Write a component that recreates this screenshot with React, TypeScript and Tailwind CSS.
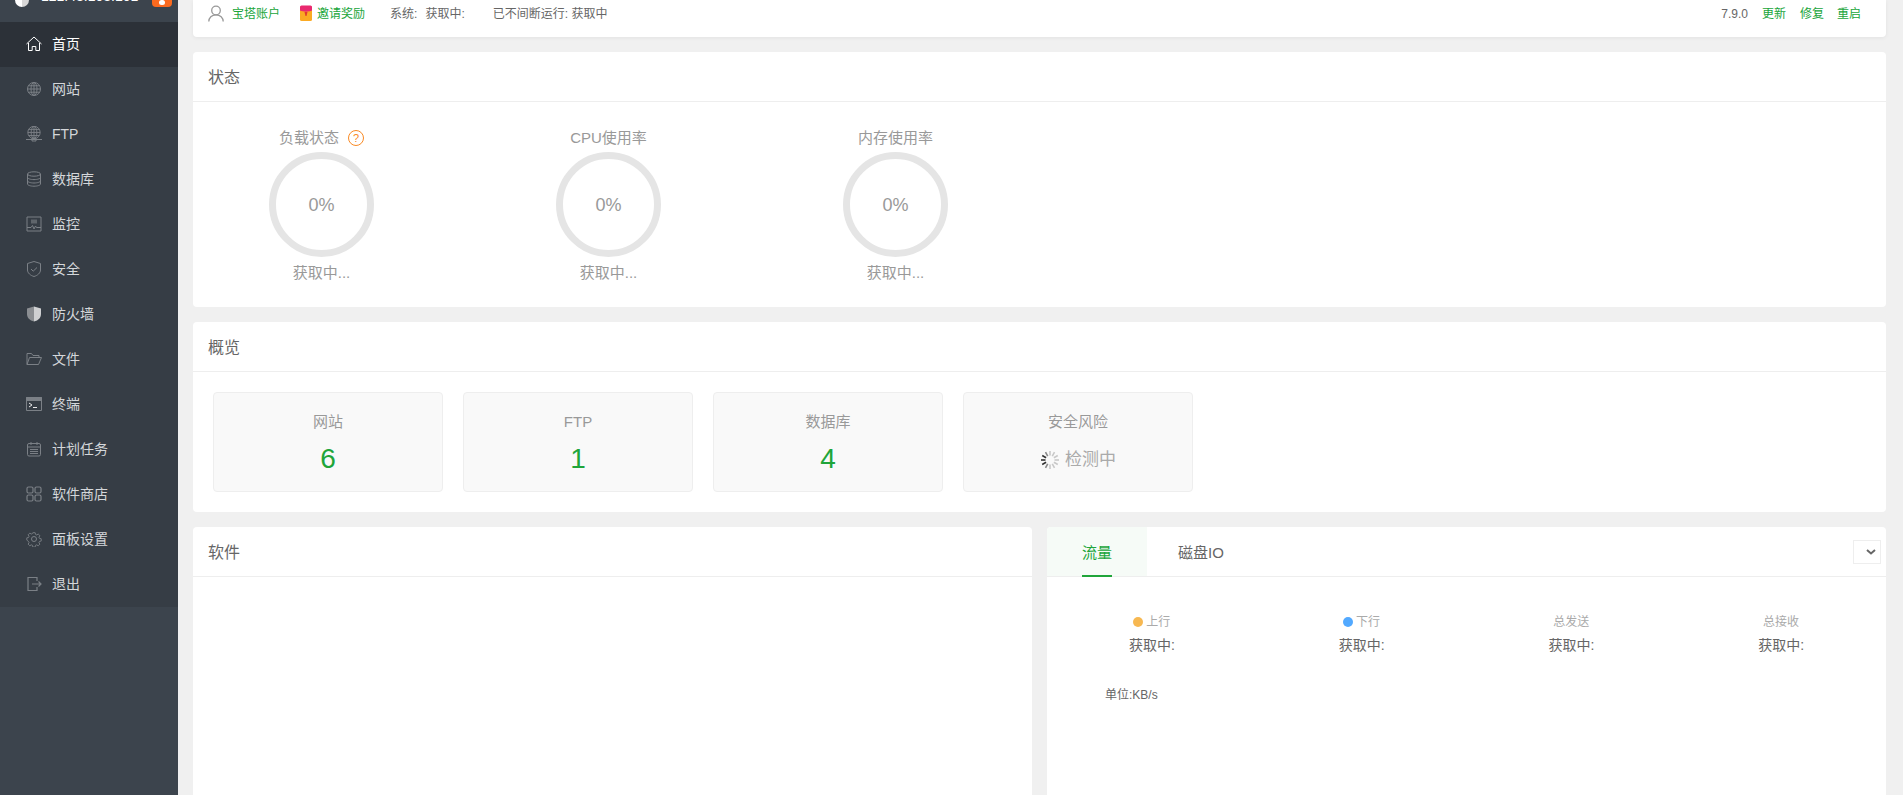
import type { ReactNode } from "react";

const iconProps = {
  width: 16,
  height: 16,
  viewBox: "0 0 16 16",
  fill: "none",
  stroke: "currentColor",
  strokeWidth: 1,
};

const Globe = () => (
  <g>
    <circle cx="8" cy="7" r="6.5" />
    <ellipse cx="8" cy="7" rx="3" ry="6.5" />
    <path d="M8 .5v13M1.5 7h13M2.4 3.8h11.2M2.4 10.2h11.2" />
  </g>
);

const NAV: { label: string; icon: ReactNode }[] = [
  {
    label: "首页",
    icon: (
      <svg {...iconProps} className="text-white">
        <path d="M.5 8 8 1l7.5 7M2.5 7v7.5h3.7v-4h3.6v4h3.7V7" />
      </svg>
    ),
  },
  {
    label: "网站",
    icon: (
      <svg {...iconProps}>
        <g transform="translate(0 1)">
          <Globe />
        </g>
      </svg>
    ),
  },
  {
    label: "FTP",
    icon: (
      <svg {...iconProps}>
        <g transform="translate(.4 -.2) scale(.95)">
          <Globe />
        </g>
        <path d="M0 13.5h16M6 12h4v3H6z" />
      </svg>
    ),
  },
  {
    label: "数据库",
    icon: (
      <svg {...iconProps}>
        <ellipse cx="8" cy="3" rx="6.5" ry="2.2" />
        <path d="M1.500 3v10c0 1.200 2.900 2.200 6.500 2.200s6.500-1 6.500-2.200V3M1.500 6.400c0 1.200 2.900 2.200 6.500 2.200s6.500-1 6.500-2.200M1.500 9.800c0 1.200 2.900 2.200 6.500 2.200s6.500-1 6.500-2.200" />
      </svg>
    ),
  },
  {
    label: "监控",
    icon: (
      <svg {...iconProps}>
        <path d="M1 1h14v14H1z" />
        <path d="M1 11.500h4l1.500-2 1.500 3.500 1.500-3 1 1.500h4.500" />
        <path d="M5 3.500h6v4H5z" fill="currentColor" stroke="none" opacity=".6" />
      </svg>
    ),
  },
  {
    label: "安全",
    icon: (
      <svg {...iconProps}>
        <path d="M8 .5 14.500 2.500V9c0 3-3 5.500-6.500 6.500C4.500 14.500 1.500 12 1.500 9V2.500z" />
        <path d="m5 8 2.200 2.200L11 6.500" />
      </svg>
    ),
  },
  {
    label: "防火墙",
    icon: (
      <svg width="16" height="16" viewBox="0 0 16 16">
        <path d="M8 .5V15.500C3.500 14.500 1 11.500 1 8V2.500z" fill="#8b8e92" />
        <path d="M8 .5 15 2.500V8c0 3.500-2.500 6.500-7 7.500z" fill="#cfd0d2" />
      </svg>
    ),
  },
  {
    label: "文件",
    icon: (
      <svg {...iconProps}>
        <path d="M1 13.500V2.500h4.500l1.500 2h6v2M1 13.500h11.500L15.500 6.500H3.500z" />
      </svg>
    ),
  },
  {
    label: "终端",
    icon: (
      <svg {...iconProps}>
        <path d="M.5 1.500h15v13H.5z" />
        <path d="M.5 1.500h15v3H.5z" fill="currentColor" />
        <path d="m3 7 3 2-3 2" stroke="#e8e8e8" />
        <path d="M7 11.500h4" stroke="#e8e8e8" />
      </svg>
    ),
  },
  {
    label: "计划任务",
    icon: (
      <svg {...iconProps}>
        <rect x="1.500" y="2.500" width="13" height="12.500" rx="1.500" />
        <path d="M1.500 6h13M5 1v3M11 1v3M4 8.500h8M4 10.500h8M4 12.500h8" />
      </svg>
    ),
  },
  {
    label: "软件商店",
    icon: (
      <svg {...iconProps} strokeWidth={1.2}>
        <rect x="1" y="1" width="6" height="6" rx="1.500" />
        <rect x="9" y="1" width="6" height="6" rx="1.500" />
        <rect x="1" y="9" width="6" height="6" rx="1.500" />
        <rect x="9" y="9" width="6" height="6" rx="1.500" />
      </svg>
    ),
  },
  {
    label: "面板设置",
    icon: (
      <svg {...iconProps}>
        <path d="M6.700 1h2.600l.4 1.900 1.300.6 1.700-1 1.800 1.800-1 1.700.6 1.300 1.900.4v2.600l-1.900.4-.6 1.300 1 1.700-1.800 1.800-1.700-1-1.300.6-.4 1.900H6.700l-.4-1.900-1.300-.6-1.700 1-1.800-1.800 1-1.700-.6-1.300L0 9.300V6.700l1.900-.4.600-1.300-1-1.700 1.800-1.800 1.700 1 1.300-.6z" transform="translate(.8 .8) scale(.9)" />
        <circle cx="8" cy="8" r="2.500" />
      </svg>
    ),
  },
  {
    label: "退出",
    icon: (
      <svg {...iconProps} strokeWidth={1.2}>
        <path d="M11 5V1.500H2v13h9V11M6 8h9M12.500 5.500 15 8l-2.500 2.500" />
      </svg>
    ),
  },
];

const GAUGES = [
  { title: "负载状态", help: true },
  { title: "CPU使用率", help: false },
  { title: "内存使用率", help: false },
];

const OVERVIEW = [
  { label: "网站", value: "6" },
  { label: "FTP", value: "1" },
  { label: "数据库", value: "4" },
];

const TRAFFIC = [
  { label: "上行", dot: "bg-[#f7b851]" },
  { label: "下行", dot: "bg-[#52a9ff]" },
  { label: "总发送", dot: "" },
  { label: "总接收", dot: "" },
];

function CardTitle({ children }: { children: ReactNode }) {
  return (
    <div className="h-[50px] border-b border-[#eee] pl-[15px] text-base leading-[51px] text-[#666]">
      {children}
    </div>
  );
}

function Spinner() {
  const bars = Array.from({ length: 12 }, (_, i) => i);
  return (
    <svg width="20" height="20" viewBox="0 0 20 20">
      {bars.map((i) => (
        <line
          key={i}
          x1="10"
          y1="1"
          x2="10"
          y2="5.500"
          stroke={i >= 8 && i <= 10 ? "#333" : i === 7 || i === 11 ? "#888" : "#c8c8c8"}
          strokeWidth="1.600"
          transform={`rotate(${i * 30} 10 10)`}
        />
      ))}
    </svg>
  );
}

export default function App() {
  return (
    <div className="flex h-screen overflow-hidden bg-[#f0f0f0] font-['Liberation_Sans','Noto_Sans_CJK_SC',sans-serif]">
      {/* sidebar */}
      <aside className="flex w-[178px] shrink-0 flex-col bg-[#3c444d]">
        <div className="flex h-[22px] items-start overflow-hidden pl-[15px]">
          <div className="-mt-[7px] h-[14px] w-[14px] shrink-0 rounded-full bg-[linear-gradient(90deg,#fff_50%,#d8d8d8_50%)]" />
          <span className="-mt-[13px] ml-[12px] text-sm leading-[18px] text-white">121.43.103.101</span>
          <div className="ml-auto mr-[6px] -mt-[8px] flex h-[15px] w-[20px] items-end justify-center rounded bg-[#fb6a1f] pb-[2px]">
            <div className="h-[5px] w-[6px] rounded-full bg-white" />
          </div>
        </div>
        <nav className="flex flex-col bg-[#363d45]">
          {NAV.map((item, i) => (
            <div
              key={item.label}
              className={`flex h-[45px] items-center gap-[10px] pb-[2px] pl-[26px] text-sm ${
                i === 0 ? "bg-[#2c3138] text-white" : "text-[#d4d7da]"
              }`}
            >
              <span className={i === 0 ? "flex text-white" : "flex text-[#7b8086]"}>{item.icon}</span>
              {item.label}
            </div>
          ))}
        </nav>
      </aside>

      {/* main */}
      <main className="flex min-w-0 flex-1 flex-col gap-[15px] pl-[15px] pr-[17px]">
        <section className="flex h-[37px] shrink-0 items-start rounded-b bg-white pt-[5px] text-xs leading-[18px] text-[#666] shadow-[0_1px_4px_rgba(0,0,0,0.06)]">
          <svg width="16" height="17" viewBox="0 0 16 17" fill="none" stroke="#999" strokeWidth="1.300" className="ml-[15px]">
            <circle cx="8" cy="5.500" r="4.300" />
            <path d="M.8 16.500c0-4 3-6.700 7.200-6.700s7.200 2.700 7.200 6.700" />
          </svg>
          <span className="ml-[8px] text-[#20a53a]">宝塔账户</span>
          <svg width="12" height="16" viewBox="0 0 12 16" className="ml-[20px]">
            <rect width="12" height="15" y="1" rx="1.500" fill="#fbaa23" />
            <path d="M0 2a1.500 1.500 0 0 1 1.500-1.500h9A1.500 1.500 0 0 1 12 2v3.500c-3 1.500-9 1.500-12 0z" fill="#e9296f" />
            <path d="M4.500 7h3l-1 4h-1z" fill="#e23a2e" />
          </svg>
          <span className="ml-[5px] text-[#20a53a]">邀请奖励</span>
          <span className="ml-[25px]">系统:</span>
          <span className="ml-[8px]">获取中:</span>
          <span className="ml-[28px]">已不间断运行: 获取中</span>
          <span className="ml-auto">7.9.0</span>
          <span className="ml-[14px] text-[#20a53a]">更新</span>
          <span className="ml-[14px] text-[#20a53a]">修复</span>
          <span className="ml-[13px] mr-[25px] text-[#20a53a]">重启</span>
        </section>

        <section className="h-[255px] shrink-0 rounded bg-white">
          <CardTitle>状态</CardTitle>
          <div className="flex gap-[182px] pl-[76px] pt-[26px]">
            {GAUGES.map((g) => (
              <div key={g.title} className="flex w-[105px] flex-col items-center text-[15px] leading-5 text-[#999]">
                <div className="flex items-center gap-[9px] whitespace-nowrap">
                  {g.title}
                  {g.help && (
                    <span className="flex h-[16px] w-[16px] items-center justify-center rounded-full border border-[#f98a25] text-[11px] leading-none text-[#f98a25]">
                      ?
                    </span>
                  )}
                </div>
                <div className="mt-[4px] flex h-[105px] w-[105px] items-center justify-center rounded-full border-[7px] border-[#e5e5e5] text-lg text-[#999]">
                  0%
                </div>
                <div className="mt-[6px] whitespace-nowrap">获取中...</div>
              </div>
            ))}
          </div>
        </section>

        <section className="h-[190px] shrink-0 rounded bg-white">
          <CardTitle>概览</CardTitle>
          <div className="flex gap-[20px] pl-[20px] pt-[20px]">
            {OVERVIEW.map((o) => (
              <div key={o.label} className="flex h-[100px] w-[230px] flex-col items-center rounded-sm border border-[#eee] bg-[#f9f9f9] pt-[18px]">
                <span className="text-[15px] leading-[22px] text-[#999]">{o.label}</span>
                <span className="mt-[8px] text-[28px] leading-[36px] text-[#20a53a]">{o.value}</span>
              </div>
            ))}
            <div className="flex h-[100px] w-[230px] flex-col items-center rounded-sm border border-[#eee] bg-[#f9f9f9] pt-[18px]">
              <span className="text-[15px] leading-[22px] text-[#999]">安全风险</span>
              <span className="mt-[9px] flex items-center gap-[5px] text-[17px] leading-[36px] text-[#aaa]">
                <Spinner />
                检测中
              </span>
            </div>
          </div>
        </section>

        <div className="grid min-h-0 flex-1 grid-cols-2 gap-[15px]">
          <section className="min-h-[300px] rounded-t bg-white">
            <CardTitle>软件</CardTitle>
          </section>
          <section className="min-h-[300px] rounded-t bg-white">
            <div className="flex h-[50px] items-start border-b border-[#eee] text-[15px] leading-[51px]">
              <div className="relative h-[49px] w-[100px] rounded-tl bg-[#f6fbf7] pl-[35px] text-[#20a53a]">
                流量
                <div className="absolute bottom-[-1px] left-[35px] h-[2px] w-[30px] bg-[#20a53a]" />
              </div>
              <div className="ml-[31px] text-[#666]">磁盘IO</div>
              <div className="ml-auto mr-[5px] mt-[13px] flex h-[24px] w-[28px] items-center justify-end border border-[#eee] pr-[4px]">
                <svg width="10" height="6" viewBox="0 0 10 6" fill="none" stroke="#666" strokeWidth="2">
                  <path d="m1 1 4 3.500L9 1" />
                </svg>
              </div>
            </div>
            <div className="grid grid-cols-4 pt-[37px] text-center leading-5">
              {TRAFFIC.map((t) => (
                <div key={t.label}>
                  <div className="flex items-center justify-center gap-[3px] text-xs text-[#aaa]">
                    {t.dot && <span className={`h-[10px] w-[10px] rounded-full ${t.dot}`} />}
                    {t.label}
                  </div>
                  <div className="mt-[5px] text-sm text-[#666]">获取中:</div>
                </div>
              ))}
            </div>
            <div className="ml-[58px] mt-[30px] text-xs leading-5 text-[#666]">单位:KB/s</div>
          </section>
        </div>
      </main>
    </div>
  );
}
